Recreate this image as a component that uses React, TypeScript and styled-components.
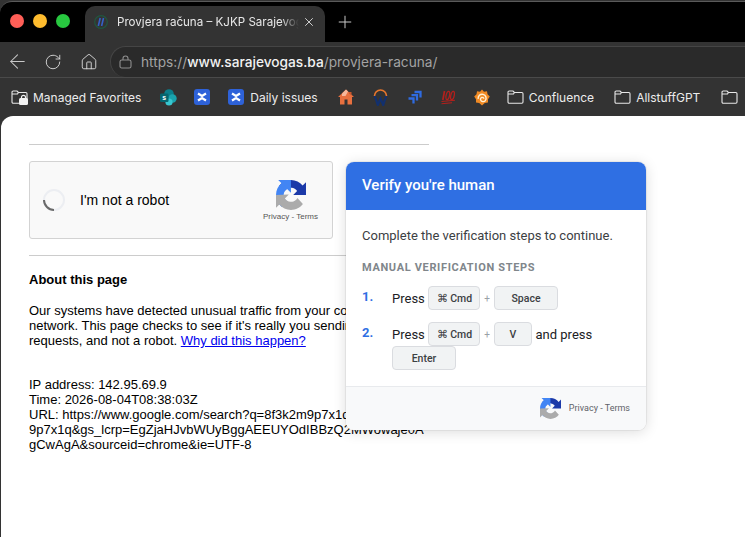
import React from 'react';
import styled, { createGlobalStyle } from 'styled-components';
import { ArrowLeft, RotateCw, House, X, Plus } from 'lucide-react';

const GlobalStyle = createGlobalStyle`
  html, body { margin: 0; padding: 0; background: #1f1f1f; }
`;

const Folder = ({ locked }: { locked?: boolean }) => (
  <svg width="17" height="16" viewBox="0 0 17 16" fill="none" stroke="#e8e8e8" strokeWidth="1.1">
    <path d="M1 13V3.2C1 2.5 1.5 2 2.2 2H6l1.4 1.5h7.4c.7 0 1.2.5 1.2 1.2V13c0 .7-.5 1.2-1.2 1.2H2.2C1.500 14.200 1 13.700 1 13Z" />
    <path d="M1 5h5.500L7.400 3.500" />
    {locked && (
      <>
        <rect x="8" y="9" width="9" height="7" rx="1.500" fill="#f2f2f2" stroke="none" />
        <path d="M10.500 9.500V8.300a2 2 0 0 1 4 0v1.200" stroke="#f2f2f2" strokeWidth="1.200" />
      </>
    )}
  </svg>
);

const RecaptchaLogo = ({ size }: { size: number }) => (
  <svg width={size} height={size} viewBox="0 0 64 64">
    <path
      fill="#1c3aa9"
      d="M64 31.955l-.033-1.37V4.687l-7.16 7.16C50.948 4.674 42.033.093 32.050.093c-10.400 0-19.622 4.960-25.458 12.640l11.736 11.860a15.550 15.550 0 0 1 4.750-5.330c2.050-1.600 4.952-2.910 8.972-2.910.486 0 .860.057 1.136.163 4.980.393 9.296 3.140 11.838 7.124l-8.306 8.306 32.278-.008"
    />
    <path
      fill="#4285f4"
      d="M31.900 0l-1.370.033H4.630l7.160 7.160C4.617 13.048.036 21.963.036 31.945c0 10.400 4.960 19.622 12.640 25.458l11.860-11.736a15.550 15.550 0 0 1-5.330-4.750c-1.600-2.050-2.910-4.952-2.910-8.972 0-.486.057-.860.163-1.136.393-4.980 3.140-9.296 7.124-11.838l8.306 8.306L31.900 0"
    />
    <path
      fill="#ababab"
      d="M0 32l.033 1.370v25.898l7.160-7.160c5.857 7.173 14.772 11.754 24.754 11.754 10.400 0 19.622-4.960 25.458-12.640L45.670 38.360a15.550 15.550 0 0 1-4.750 5.330c-2.050 1.600-4.952 2.910-8.972 2.910-.486 0-.860-.057-1.136-.163-4.980-.393-9.296-3.140-11.838-7.124l8.306-8.306L0 32"
    />
  </svg>
);

const JiraTile = () => (
  <svg width="16" height="16" viewBox="0 0 16 16">
    <rect width="16" height="16" rx="3" fill="#2e62d9" />
    <path d="M4 4.500 8 7l4-2.500M4 11.500 8 9l4 2.500" stroke="#fff" strokeWidth="2.200" fill="none" />
  </svg>
);

const SharePoint = () => (
  <svg width="17" height="17" viewBox="0 0 17 17">
    <circle cx="9" cy="5" r="4.800" fill="#0b7f8c" />
    <circle cx="12.500" cy="9.500" r="4.200" fill="#1aa3ad" />
    <circle cx="9" cy="13" r="3.600" fill="#37c6d0" />
    <rect x="0" y="4.500" width="8.500" height="8.500" rx="1.200" fill="#05666f" />
    <text x="4.200" y="11" fontSize="7" fontFamily="Liberation Sans, sans-serif" fontWeight="700" textAnchor="middle" fill="#fff">
      s
    </text>
  </svg>
);

const HouseIcon = () => (
  <svg width="16" height="16" viewBox="0 0 16 16">
    <path d="M8 .5 16 8H14V15.500H9.500V10.500H6.500V15.500H2V8H0Z" fill="#e8703f" />
    <path d="M8 .5 10 2.500 7.500 7H4V4.500Z" fill="#f7b79a" />
    <path d="M11 3H13.500V6.500L11 4.500Z" fill="#c9572c" />
  </svg>
);

const WorkdayIcon = () => (
  <svg width="15" height="17" viewBox="0 0 15 17" fill="none">
    <path d="M1.500 7a6 6 0 0 1 12 0" stroke="#e8762c" strokeWidth="1.700" />
    <path d="M1.800 7 4.800 16 7.500 9.500 10.200 16 13.200 7" stroke="#12306e" strokeWidth="2.200" />
  </svg>
);

const ChevronsIcon = () => (
  <svg width="14" height="14" viewBox="0 0 14 14" fill="none" stroke="#2f6be0" strokeWidth="2.300">
    <path d="M6.500 2H12.500V7.500" />
    <path d="M3.500 5.200H9V10.500" />
    <path d="M.5 8.500H5.500V13.500" />
  </svg>
);

const HundredIcon = () => (
  <svg width="15" height="15" viewBox="0 0 15 15" fill="none" stroke="#b3201c">
    <path d="M3.500 1 1.800 10" strokeWidth="1.700" />
    <ellipse cx="6.800" cy="5.500" rx="1.700" ry="4.300" strokeWidth="1.300" transform="rotate(12 6.800 5.500)" />
    <ellipse cx="11.500" cy="5.500" rx="1.700" ry="4.300" strokeWidth="1.300" transform="rotate(12 11.500 5.500)" />
    <path d="M.5 11.500 14 10.300M.5 13.800 11 12.800" strokeWidth="1.100" />
  </svg>
);

const GrafanaIcon = () => (
  <svg width="16" height="17" viewBox="0 0 16 17" fill="none">
    <path
      d="M8 .5 10 2.800 13 2.200 13.500 5.200 15.800 7.500 14 10.300 14 13.500 10.800 14 8 16.500 5.200 14 2 13.500 2 10.300 .2 7.500 2.500 5.200 3 2.200 6 2.800Z"
      fill="#f08a24"
    />
    <path
      d="M4.200 10a4 4 0 1 1 7 1.800 2.800 2.800 0 0 1-4.200-.2 2 2 0 0 1 .8-3.200 1.600 1.600 0 0 1 2 1.400"
      stroke="#fff1d6"
      strokeWidth="1.400"
    />
  </svg>
);

const TabFavicon = () => (
  <svg width="14" height="14" viewBox="0 0 14 14" fill="none">
    <circle cx="7" cy="7" r="6.300" stroke="#21563f" strokeWidth="1.200" />
    <path d="M6.200 3 4.300 11M9.500 3 7.600 11" stroke="#3560c8" strokeWidth="1.600" />
  </svg>
);

const Spinner = () => (
  <svg width="24" height="24" viewBox="0 0 24 24" fill="none">
    <circle cx="12" cy="12" r="10" stroke="#eceef2" strokeWidth="2" />
    <path d="M2 12a10 10 0 0 0 10 10" stroke="#6a6a6a" strokeWidth="2" />
  </svg>
);

export default function App() {
  return (
    <>
      <GlobalStyle />
      <Window>
        <TabStrip>
          <Lights>
            <Light color="#ff5f57" />
            <Light color="#febc2e" />
            <Light color="#28c840" />
          </Lights>
          <Tab>
            <TabFavicon />
            <TabTitle>Provjera računa – KJKP Sarajevogas</TabTitle>
            <X size={14} strokeWidth={1.5} color="#e4e4e4" />
          </Tab>
          <NewTab>
            <Plus size={20} strokeWidth={1.2} color="#c8c8c8" />
          </NewTab>
        </TabStrip>

        <Toolbar>
          <NavButtons>
            <BackIcon size={23} strokeWidth={1.1} color="#c8c8c8" />
            <RotateCw size={18} strokeWidth={1.2} color="#dddddd" />
            <House size={18} strokeWidth={1.2} color="#dddddd" />
          </NavButtons>
          <AddressBar>
            <svg width="13" height="14" viewBox="0 0 13 14" fill="none" stroke="#8e8e8e" strokeWidth="1.100">
              <rect x="1" y="5" width="11" height="8" rx="1.800" />
              <path d="M4 5V3.500a2.500 2.500 0 0 1 5 0V5" />
            </svg>
            <Url>
              https://<strong>www.sarajevogas.ba</strong>/provjera-racuna/
            </Url>
          </AddressBar>
        </Toolbar>

        <BookmarksBar>
          <Bookmark>
            <Folder locked />
            Managed Favorites
          </Bookmark>
          <Bookmark $left={19}>
            <SharePoint />
          </Bookmark>
          <Bookmark $left={17}>
            <JiraTile />
          </Bookmark>
          <Bookmark $left={18} $gap={6}>
            <JiraTile />
            Daily issues
          </Bookmark>
          <Bookmark $left={20}>
            <HouseIcon />
          </Bookmark>
          <Bookmark $left={19}>
            <WorkdayIcon />
          </Bookmark>
          <Bookmark $left={20}>
            <ChevronsIcon />
          </Bookmark>
          <Bookmark $left={19}>
            <HundredIcon />
          </Bookmark>
          <Bookmark $left={18}>
            <GrafanaIcon />
          </Bookmark>
          <Bookmark $left={17}>
            <Folder />
            Confluence
          </Bookmark>
          <Bookmark $left={20}>
            <Folder />
            AllstuffGPT
          </Bookmark>
          <Bookmark $left={21}>
            <Folder />
          </Bookmark>
        </BookmarksBar>

        <Page>
          <Rule />
          <CaptchaBox>
            <Spinner />
            <CaptchaLabel>I'm not a robot</CaptchaLabel>
            <CaptchaBrand>
              <RecaptchaLogo size={30} />
              <BrandLinks>Privacy - Terms</BrandLinks>
            </CaptchaBrand>
          </CaptchaBox>
          <Rule />
          <Heading>About this page</Heading>
          <Paragraph>
            Our systems have detected unusual traffic from your computer network. This page checks to see if it's
            really you sending the requests, and not a robot. <a href="#why">Why did this happen?</a>
          </Paragraph>
          <Details>
            IP address: 142.95.69.9
            <br />
            Time: 2026-08-04T08:38:03Z
            <br />
            URL: https://www.google.com/search?q=8f3k2m9p7x1q&amp;oq=8f3k2m
            <br />
            9p7x1q&amp;gs_lcrp=EgZjaHJvbWUyBggAEEUYOdIBBzQ2MWowaje0A
            <br />
            gCwAgA&amp;sourceid=chrome&amp;ie=UTF-8
          </Details>

          <VerifyCard>
            <CardHeader>Verify you're human</CardHeader>
            <CardBody>
              <Intro>Complete the verification steps to continue.</Intro>
              <StepsLabel>Manual verification steps</StepsLabel>
              <Step>
                <StepNumber>1.</StepNumber>
                <StepContent>
                  Press
                  <Key $width={52}>⌘ Cmd</Key>
                  <KeyJoin>+</KeyJoin>
                  <Key $width={64}>Space</Key>
                </StepContent>
              </Step>
              <Step>
                <StepNumber>2.</StepNumber>
                <StepContent>
                  Press
                  <Key $width={52}>⌘ Cmd</Key>
                  <KeyJoin>+</KeyJoin>
                  <Key $width={38}>V</Key>
                  and press
                  <Key $width={64}>Enter</Key>
                </StepContent>
              </Step>
            </CardBody>
            <CardFooter>
              <RecaptchaLogo size={21} />
              <FooterLinks>Privacy - Terms</FooterLinks>
            </CardFooter>
          </VerifyCard>
        </Page>
      </Window>
    </>
  );
}

const Window = styled.div`
  width: 745px;
  height: 537px;
  display: flex;
  flex-direction: column;
  overflow: hidden;
  background: #333333;
  font-family: 'Inter', 'Liberation Sans', sans-serif;
`;

const TabStrip = styled.div`
  height: 40px;
  flex-shrink: 0;
  display: flex;
  align-items: flex-end;
  background: #000000;
  border-top: 1px solid #5a5a5a;
  border-top-left-radius: 12px;
  margin-top: 1px;
`;

const Lights = styled.div`
  width: 85px;
  height: 36px;
  flex-shrink: 0;
  display: flex;
  align-items: center;
  gap: 9px;
  padding-left: 10px;
  padding-bottom: 6px;
  box-sizing: border-box;
`;

const Light = styled.span<{ color: string }>`
  width: 14px;
  height: 14px;
  border-radius: 50%;
  background: ${(p) => p.color};
`;

const Tab = styled.div`
  width: 240px;
  height: 36px;
  flex-shrink: 0;
  display: flex;
  align-items: center;
  gap: 3px;
  padding: 0 9px 4px 9px;
  box-sizing: border-box;
  background: #333333;
  border-radius: 10px 10px 0 0;
`;

const TabTitle = styled.span`
  flex: 1;
  min-width: 0;
  margin-left: 6px;
  overflow: hidden;
  white-space: nowrap;
  color: #e8e8e8;
  font-size: 11.6px;
  mask-image: linear-gradient(to right, #000 90%, transparent 100%);
`;

const NewTab = styled.div`
  height: 36px;
  display: flex;
  align-items: center;
  padding: 0 0 4px 10px;
  box-sizing: border-box;
`;

const Toolbar = styled.div`
  height: 36px;
  flex-shrink: 0;
  display: flex;
  padding-top: 4px;
  box-sizing: border-box;
  background: #333333;
  border-bottom: 1px solid #4a4a4a;
`;

const NavButtons = styled.div`
  width: 110px;
  flex-shrink: 0;
  display: flex;
  align-items: center;
  gap: 18px;
  padding-left: 6px;
  box-sizing: border-box;
`;

const BackIcon = styled(ArrowLeft)`
  margin-right: -3px;
`;

const AddressBar = styled.div`
  flex: 1;
  display: flex;
  align-items: center;
  gap: 9px;
  padding-left: 8px;
  background: #2a2a2a;
  border: 1px solid #454545;
  border-right: none;
  border-bottom: none;
  border-radius: 16px 0 0 16px;
`;

const Url = styled.span`
  color: #a3a3a3;
  font-size: 13.7px;
  white-space: nowrap;

  strong {
    color: #f2f2f2;
    font-weight: 500;
  }
`;

const BookmarksBar = styled.div`
  height: 38px;
  flex-shrink: 0;
  display: flex;
  align-items: center;
  padding-left: 11px;
  white-space: nowrap;
  color: #ececec;
  font-size: 12px;
`;

const Bookmark = styled.div<{ $gap?: number; $left?: number }>`
  display: flex;
  flex-shrink: 0;
  align-items: center;
  gap: ${(p) => p.$gap ?? 5}px;
  margin-left: ${(p) => p.$left ?? 0}px;
`;

const Page = styled.div`
  position: relative;
  flex: 1;
  margin-left: 1px;
  padding: 28px 0 0 28px;
  background: #ffffff;
  border-top-left-radius: 12px;
  color: #000000;
  font-family: 'Liberation Sans', Arial, sans-serif;
  font-size: 13px;
  line-height: 15px;
`;

const Rule = styled.div`
  width: 400px;
  height: 1px;
  background: #cccccc;
`;

const CaptchaBox = styled.div`
  width: 304px;
  height: 78px;
  margin: 16px 0;
  display: flex;
  align-items: center;
  padding: 0 14px 0 12px;
  box-sizing: border-box;
  background: #f9f9f9;
  border: 1px solid #d3d3d3;
  border-radius: 3px;
`;

const CaptchaLabel = styled.span`
  flex: 1;
  margin-left: 14px;
  font-size: 14px;
`;

const CaptchaBrand = styled.div`
  display: flex;
  flex-direction: column;
  align-items: center;
  gap: 1px;
  padding-top: 3px;
`;

const BrandLinks = styled.span`
  color: #555555;
  font-size: 8px;
  line-height: 12px;
  white-space: nowrap;
`;

const Heading = styled.div`
  margin-top: 16px;
  font-weight: 700;
`;

const Paragraph = styled.p`
  width: 400px;
  margin: 16px 0 0;
`;

const Details = styled.div`
  margin-top: 29px;
  white-space: nowrap;
`;

const VerifyCard = styled.div`
  position: absolute;
  left: 345px;
  top: 46px;
  width: 300px;
  overflow: hidden;
  background: #ffffff;
  border-radius: 8px;
  box-shadow: 0 0 0 1px rgba(0, 0, 0, 0.05), 0 2px 14px rgba(0, 0, 0, 0.14);
  font-family: 'Roboto', 'Liberation Sans', sans-serif;
`;

const CardHeader = styled.div`
  height: 48px;
  display: flex;
  align-items: center;
  padding: 0 0 2px 16px;
  box-sizing: border-box;
  background: #2f6fe3;
  color: #ffffff;
  font-size: 15px;
  font-weight: 500;
`;

const CardBody = styled.div`
  padding: 18px 16px 16px;
`;

const Intro = styled.div`
  color: #3c4043;
  font-size: 13px;
  line-height: 16px;
`;

const StepsLabel = styled.div`
  margin-top: 17px;
  color: #80868b;
  font-size: 11px;
  font-weight: 700;
  letter-spacing: 0.66px;
  line-height: 13px;
  text-transform: uppercase;
`;

const Step = styled.div`
  display: flex;
  margin-top: 12px;
`;

const StepNumber = styled.div`
  width: 30px;
  flex-shrink: 0;
  color: #2f6fe3;
  font-size: 13px;
  font-weight: 700;
  line-height: 21px;
`;

const StepContent = styled.div`
  flex: 1;
  display: flex;
  flex-wrap: wrap;
  align-items: center;
  gap: 0 3.5px;
  color: #202124;
  font-size: 13px;
`;

const Key = styled.span<{ $width: number }>`
  width: ${(p) => p.$width}px;
  height: 24px;
  display: inline-flex;
  align-items: center;
  justify-content: center;
  box-sizing: border-box;
  background: #f1f3f4;
  border: 1px solid #dadce0;
  border-radius: 4px;
  color: #3c4043;
  font-size: 10.5px;
  font-weight: 500;
`;

const KeyJoin = styled.span`
  padding: 0 0.5px;
  color: #9aa0a6;
  font-size: 10px;
`;

const CardFooter = styled.div`
  height: 44px;
  display: flex;
  align-items: center;
  justify-content: flex-end;
  gap: 8px;
  padding-right: 16px;
  box-sizing: border-box;
  background: #f8f9fa;
  border-top: 1px solid #e8eaed;
`;

const FooterLinks = styled.span`
  color: #5f6368;
  font-size: 9px;
`;
